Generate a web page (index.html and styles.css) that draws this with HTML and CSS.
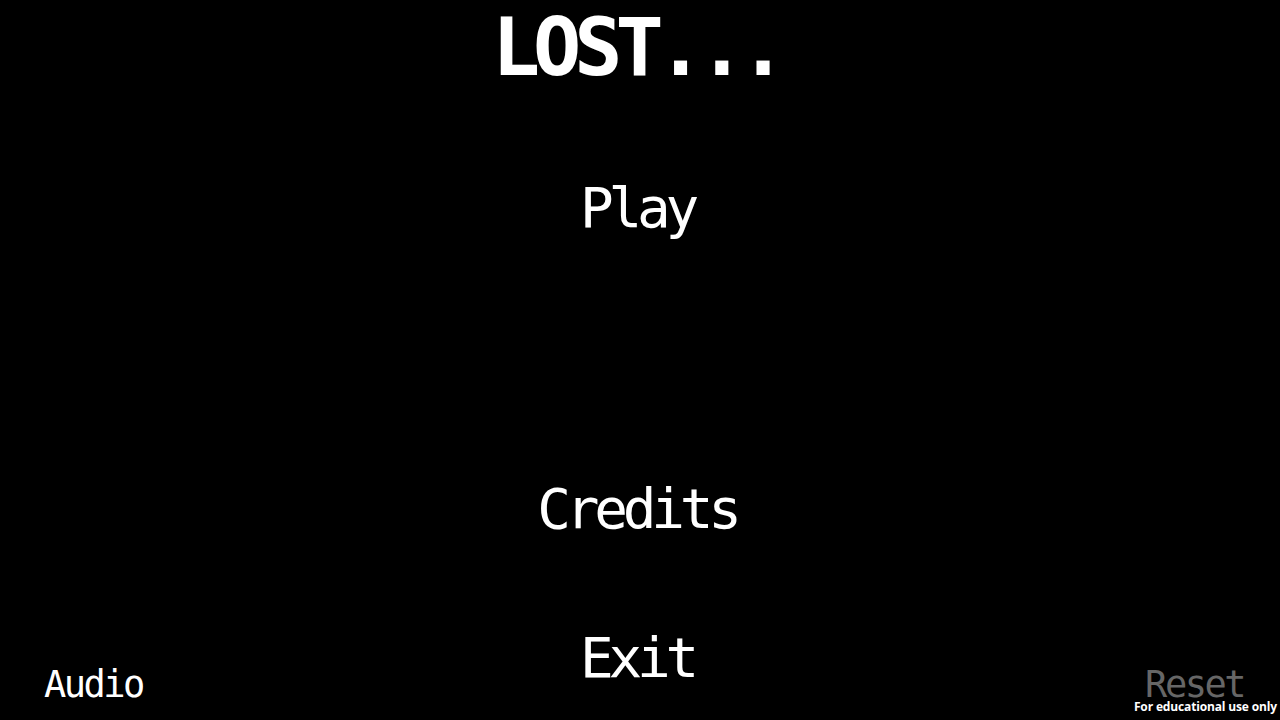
FILE: index.html
```html
<!DOCTYPE html>
<html lang="en">
  <head>
    <meta charset="UTF-8" />
    <meta name="viewport" content="width=device-width, initial-scale=1.0" />
    <title>LOST...</title>
    <link rel="stylesheet" href="styles.css">
  </head>
  <body>
    <div class="screen">
      <h1 class="title">LOST...</h1>

      <button class="menu-item play">Play</button>
      <button class="menu-item credits">Credits</button>
      <button class="menu-item exit">Exit</button>

      <button class="corner audio">Audio</button>
      <button class="corner reset">Reset</button>

      <div class="watermark">For educational use only</div>
    </div>
  </body>
</html>
```

FILE: styles.css
```css
body {
  margin: 0;
  background-color: #000;
  font-family: "DejaVu Sans Mono", monospace;
  color: #fff;
}

/* main menu screen */
.screen {
  position: relative;
  width: 1280px;
  height: 720px;
  display: grid;
  grid-template-columns: 1fr auto 1fr;
  grid-template-rows: auto auto auto 1fr;
  overflow: hidden;
}

button {
  background: none;
  border: none;
  padding: 0;
  color: inherit;
  font-family: inherit;
  cursor: pointer;
}

.title {
  grid-column: 2;
  grid-row: 1;
  justify-self: center;
  margin: 8px 8px 0 0;
  font-size: 80px;
  font-weight: bold;
  line-height: 1;
  letter-spacing: -7px;
}

/* menu buttons */
.menu-item {
  grid-column: 2;
  justify-self: center;
  margin-right: 6px;
  font-size: 56px;
  line-height: 1;
  letter-spacing: -5.2px;
}

.play {
  grid-row: 2;
  margin-top: 92px;
}

.credits {
  grid-row: 3;
  margin-top: 245px;
}

.exit {
  grid-row: 4;
  align-self: start;
  margin-top: 93px;
}

/* small buttons in the bottom corners */
.corner {
  grid-row: 4;
  align-self: end;
  margin-bottom: 17px;
  font-size: 37px;
  line-height: 1;
  letter-spacing: -2.5px;
}

.audio {
  grid-column: 1;
  justify-self: start;
  margin-left: 44px;
}

.reset {
  grid-column: 3;
  justify-self: end;
  margin-right: 36px;
  color: #666;
}

.watermark {
  position: absolute;
  right: 3px;
  bottom: 6px;
  font-family: "Open Sans", sans-serif;
  font-size: 12px;
  font-weight: bold;
  line-height: 14px;
  letter-spacing: -0.15px;
  color: #fff;
}
```
